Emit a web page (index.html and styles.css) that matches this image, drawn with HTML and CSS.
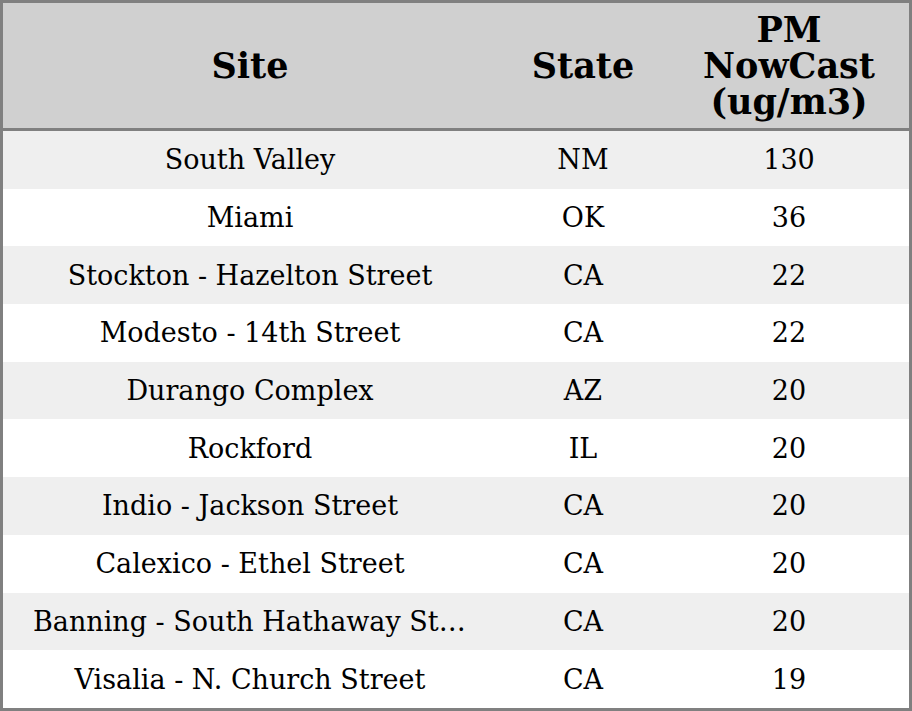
FILE: index.html
```html
<!DOCTYPE html>
<html>
<head>
<meta charset="utf-8">
<link rel="stylesheet" href="styles.css">
</head>
<body>
<table class="grid">
  <colgroup>
    <col class="c-site">
    <col class="c-state">
    <col class="c-pm">
  </colgroup>
  <thead>
    <tr><th>Site</th><th>State</th><th>PM NowCast (ug/m3)</th></tr>
  </thead>
  <tbody>
    <tr><td>South Valley</td><td>NM</td><td>130</td></tr>
    <tr><td>Miami</td><td>OK</td><td>36</td></tr>
    <tr><td>Stockton - Hazelton Street</td><td>CA</td><td>22</td></tr>
    <tr><td>Modesto - 14th Street</td><td>CA</td><td>22</td></tr>
    <tr><td>Durango Complex</td><td>AZ</td><td>20</td></tr>
    <tr><td>Rockford</td><td>IL</td><td>20</td></tr>
    <tr><td>Indio - Jackson Street</td><td>CA</td><td>20</td></tr>
    <tr><td>Calexico - Ethel Street</td><td>CA</td><td>20</td></tr>
    <tr><td>Banning - South Hathaway Street</td><td>CA</td><td>20</td></tr>
    <tr><td>Visalia - N. Church Street</td><td>CA</td><td>19</td></tr>
  </tbody>
</table>
</body>
</html>
```
FILE: styles.css
```css
html, body {
  margin: 0;
  padding: 0;
  background: #ffffff;
}
.grid {
  width: 912px;
  height: 711px;
  border-collapse: separate;
  border-spacing: 0;
  border: 3px solid #808080;
  table-layout: fixed;
  font-family: "DejaVu Serif", serif;
  color: #000;
}
.c-site { width: 494px; }
.c-state { width: 172px; }
.c-pm { width: 240px; }
.grid th {
  background: #d0d0d0;
  font-size: 35px;
  font-weight: bold;
  line-height: 36px;
  height: 125px;
  padding: 0 20px;
  text-align: center;
  border-bottom: 3px solid #808080;
}
.grid td {
  font-size: 27px;
  height: 57.7px;
  padding: 0 30px;
  text-align: center;
  white-space: nowrap;
  overflow: hidden;
  text-overflow: ellipsis;
}
.grid tbody tr:nth-child(odd) td {
  background: #efefef;
}
```
